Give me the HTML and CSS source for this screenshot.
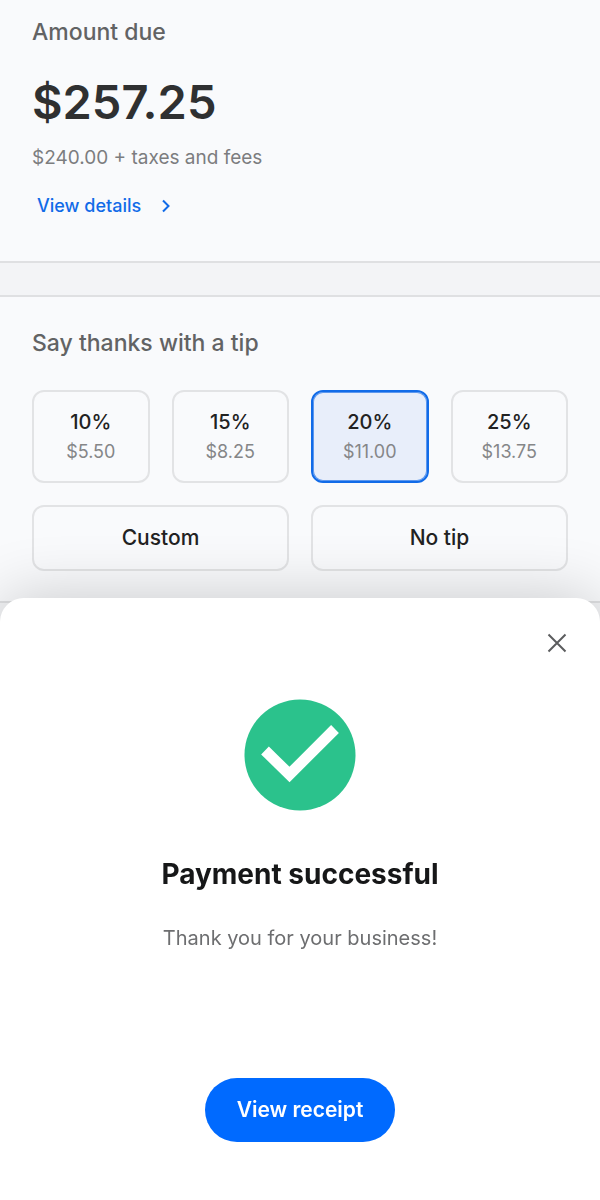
FILE: index.html
```html
<!DOCTYPE html>
<html lang="en">
<head>
<meta charset="utf-8">
<meta name="viewport" content="width=device-width, initial-scale=1">
<title>Payment</title>
<link rel="stylesheet" href="styles.css">
</head>
<body>
<main class="checkout">
  <section class="panel amount">
    <h2 class="panel-title">Amount due</h2>
    <p class="total">$257.25</p>
    <p class="breakdown">$240.00 + taxes and fees</p>
    <a class="details" href="#details">View details
      <svg class="chevron" viewBox="0 0 10 14" aria-hidden="true"><path d="M2 1.500 7.500 7 2 12.500"/></svg>
    </a>
  </section>
  <section class="panel tips">
    <h2 class="panel-title">Say thanks with a tip</h2>
    <div class="tip-grid">
      <button class="tip" type="button"><span class="rate">10%</span><span class="value">$5.50</span></button>
      <button class="tip" type="button"><span class="rate">15%</span><span class="value">$8.25</span></button>
      <button class="tip selected" type="button" aria-pressed="true"><span class="rate">20%</span><span class="value">$11.00</span></button>
      <button class="tip" type="button"><span class="rate">25%</span><span class="value">$13.75</span></button>
      <button class="tip wide" type="button">Custom</button>
      <button class="tip wide" type="button">No tip</button>
    </div>
  </section>
</main>
<div class="sheet" role="dialog" aria-labelledby="sheet-title">
  <button class="close" type="button" aria-label="Close">
    <svg class="close-icon" viewBox="0 0 20 20" aria-hidden="true"><path d="M1.500 1.500 18.500 18.500M18.500 1.500 1.500 18.500"/></svg>
  </button>
  <svg class="success" viewBox="0 0 112 112" aria-hidden="true">
    <circle cx="56" cy="56" r="55.500" fill="#2bc28c"/>
    <path d="M21 51.500 45.500 75.500 91 30" fill="none" stroke="#fff" stroke-width="11"/>
  </svg>
  <h1 class="sheet-title" id="sheet-title">Payment successful</h1>
  <p class="thanks">Thank you for your business!</p>
  <button class="receipt" type="button">View receipt</button>
</div>
</body>
</html>
```
FILE: styles.css
```css
* {
  box-sizing: border-box;
}

body {
  margin: 0;
  min-height: 100vh;
  background: #f3f4f6;
  color: #222;
  font-family: Inter, "Liberation Sans", sans-serif;
}

h1,
h2,
p {
  margin: 0;
}

button {
  font: inherit;
  color: inherit;
  cursor: pointer;
}

.checkout {
  display: flex;
  flex-direction: column;
  gap: 32px;
}

.panel {
  padding: 30px 32px;
  background: #f9fafc;
  border-bottom: 2px solid #dfe0e2;
}

.amount {
  padding-top: 16px;
  padding-bottom: 41px;
}

.tips {
  border-top: 2px solid #dfe0e2;
}

.panel-title {
  font-size: 23px;
  line-height: 32px;
  font-weight: 500;
  color: #626364;
}

.total {
  margin-top: 24px;
  font-size: 47px;
  line-height: 60px;
  font-weight: 600;
  color: #2f3031;
}

.breakdown {
  margin-top: 12px;
  font-size: 19px;
  line-height: 28px;
  color: #7c7d7f;
}

.details {
  display: inline-flex;
  align-items: center;
  gap: 20px;
  margin-top: 20px;
  padding: 0 5px;
  font-size: 18px;
  line-height: 28px;
  font-weight: 500;
  color: #116be8;
  text-decoration: none;
}

.chevron {
  width: 10px;
  height: 14px;
  fill: none;
  stroke: currentColor;
  stroke-width: 2;
}

.tip-grid {
  display: grid;
  grid-template-columns: repeat(4, 1fr);
  gap: 22px;
  margin-top: 31px;
}

.tip {
  display: flex;
  flex-direction: column;
  align-items: center;
  padding: 15px 0 14px;
  border: 2px solid #e2e3e5;
  border-radius: 12px;
  background: none;
  font-size: 20px;
  line-height: 30px;
  font-weight: 500;
}

.selected {
  border-color: #116be8;
  background: #e8eefa;
  box-shadow: inset 0 0 0 1px #5c97ee;
}

.value {
  font-size: 18px;
  font-weight: 400;
  color: #858688;
}

.wide {
  grid-column: span 2;
  padding: 16px 0;
  font-size: 21px;
}

.sheet {
  position: fixed;
  right: 0;
  bottom: 0;
  left: 0;
  display: flex;
  flex-direction: column;
  align-items: center;
  padding: 32px 32px 58px;
  border-radius: 24px 24px 0 0;
  background: #fff;
  box-shadow: 0 0 64px rgba(0, 0, 0, 0.2);
}

.close {
  display: flex;
  align-self: flex-end;
  padding: 3px 1px;
  border: 0;
  background: none;
}

.close-icon {
  width: 20px;
  height: 20px;
  fill: none;
  stroke: #5b5c5e;
  stroke-width: 2;
}

.success {
  width: 112px;
  height: 112px;
  margin-top: 43px;
}

.sheet-title {
  margin-top: 43px;
  font-size: 28px;
  line-height: 40px;
  font-weight: 700;
  color: #161718;
}

.thanks {
  margin-top: 28px;
  font-size: 20px;
  line-height: 32px;
  color: #6d6e70;
}

.receipt {
  margin-top: 124px;
  padding: 16px 32px;
  border: 0;
  border-radius: 32px;
  background: #006aff;
  font-size: 21px;
  line-height: 32px;
  font-weight: 600;
  color: #fff;
}
```
